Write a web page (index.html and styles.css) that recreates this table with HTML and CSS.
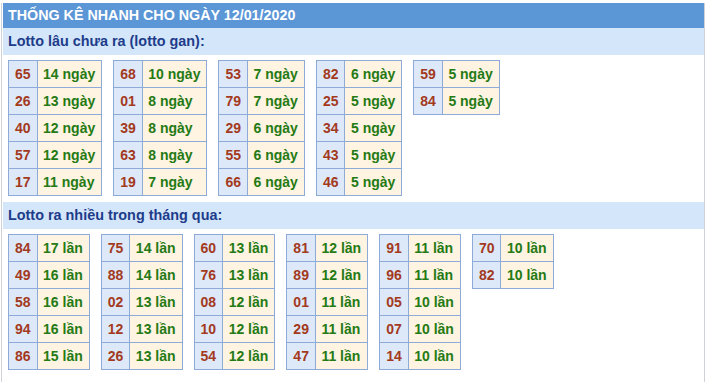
FILE: index.html
```html
<!DOCTYPE html>
<html lang="vi">
<head>
<meta charset="utf-8">
<title>Thống kê nhanh</title>
<link rel="stylesheet" href="styles.css">
</head>
<body>
<div class="box">
  <div class="title">THỐNG KÊ NHANH CHO NGÀY 12/01/2020</div>
  <div class="sub">Lotto lâu chưa ra (lotto gan):</div>
  <div class="tables">
    <table><tr><td class="n">65</td><td class="v">14 ngày</td></tr><tr><td class="n">26</td><td class="v">13 ngày</td></tr><tr><td class="n">40</td><td class="v">12 ngày</td></tr><tr><td class="n">57</td><td class="v">12 ngày</td></tr><tr><td class="n">17</td><td class="v">11 ngày</td></tr></table>
    <table><tr><td class="n">68</td><td class="v">10 ngày</td></tr><tr><td class="n">01</td><td class="v">8 ngày</td></tr><tr><td class="n">39</td><td class="v">8 ngày</td></tr><tr><td class="n">63</td><td class="v">8 ngày</td></tr><tr><td class="n">19</td><td class="v">7 ngày</td></tr></table>
    <table><tr><td class="n">53</td><td class="v">7 ngày</td></tr><tr><td class="n">79</td><td class="v">7 ngày</td></tr><tr><td class="n">29</td><td class="v">6 ngày</td></tr><tr><td class="n">55</td><td class="v">6 ngày</td></tr><tr><td class="n">66</td><td class="v">6 ngày</td></tr></table>
    <table><tr><td class="n">82</td><td class="v">6 ngày</td></tr><tr><td class="n">25</td><td class="v">5 ngày</td></tr><tr><td class="n">34</td><td class="v">5 ngày</td></tr><tr><td class="n">43</td><td class="v">5 ngày</td></tr><tr><td class="n">46</td><td class="v">5 ngày</td></tr></table>
    <table><tr><td class="n">59</td><td class="v">5 ngày</td></tr><tr><td class="n">84</td><td class="v">5 ngày</td></tr></table>
  </div>
  <div class="sub">Lotto ra nhiều trong tháng qua:</div>
  <div class="tables">
    <table><tr><td class="n">84</td><td class="v">17 lần</td></tr><tr><td class="n">49</td><td class="v">16 lần</td></tr><tr><td class="n">58</td><td class="v">16 lần</td></tr><tr><td class="n">94</td><td class="v">16 lần</td></tr><tr><td class="n">86</td><td class="v">15 lần</td></tr></table>
    <table><tr><td class="n">75</td><td class="v">14 lần</td></tr><tr><td class="n">88</td><td class="v">14 lần</td></tr><tr><td class="n">02</td><td class="v">13 lần</td></tr><tr><td class="n">12</td><td class="v">13 lần</td></tr><tr><td class="n">26</td><td class="v">13 lần</td></tr></table>
    <table><tr><td class="n">60</td><td class="v">13 lần</td></tr><tr><td class="n">76</td><td class="v">13 lần</td></tr><tr><td class="n">08</td><td class="v">12 lần</td></tr><tr><td class="n">10</td><td class="v">12 lần</td></tr><tr><td class="n">54</td><td class="v">12 lần</td></tr></table>
    <table><tr><td class="n">81</td><td class="v">12 lần</td></tr><tr><td class="n">89</td><td class="v">12 lần</td></tr><tr><td class="n">01</td><td class="v">11 lần</td></tr><tr><td class="n">29</td><td class="v">11 lần</td></tr><tr><td class="n">47</td><td class="v">11 lần</td></tr></table>
    <table><tr><td class="n">91</td><td class="v">11 lần</td></tr><tr><td class="n">96</td><td class="v">11 lần</td></tr><tr><td class="n">05</td><td class="v">10 lần</td></tr><tr><td class="n">07</td><td class="v">10 lần</td></tr><tr><td class="n">14</td><td class="v">10 lần</td></tr></table>
    <table><tr><td class="n">70</td><td class="v">10 lần</td></tr><tr><td class="n">82</td><td class="v">10 lần</td></tr></table>
  </div>
</div>
</body>
</html>
```
FILE: styles.css
```css
html, body {
  margin: 0;
  padding: 0;
  background: #ffffff;
}
body {
  font-family: "Liberation Sans", Arial, sans-serif;
  font-size: 14px;
  font-weight: bold;
}
.box {
  margin: 3px 0 0 1px;
  width: 702px;
  border-left: 1px solid #cfd3d8;
  border-right: 1px solid #cfd3d8;
  padding-bottom: 8px;
}
.title {
  margin-left: 1px;
  height: 25px;
  line-height: 25px;
  padding-left: 5px;
  background: #5b96d6;
  color: #ffffff;
  font-size: 14.3px;
}
.sub {
  margin-left: 1px;
  height: 27px;
  line-height: 27px;
  padding-left: 5px;
  background: #d4e6fa;
  color: #1d3c8a;
  font-size: 14.4px;
}
.tables {
  display: flex;
  align-items: flex-start;
  gap: 11px;
  padding: 5px 0 6px 6px;
}
table {
  border-collapse: collapse;
}
td {
  border: 1px solid #8eaad8;
  height: 26px;
  line-height: 26px;
  padding: 0 6px;
  white-space: nowrap;
}
td.n {
  background: #dde9f9;
  color: #a33a1e;
}
td.v {
  background: #fff3e1;
  color: #247a14;
  padding: 0 6px 0 5.5px;
}
```
